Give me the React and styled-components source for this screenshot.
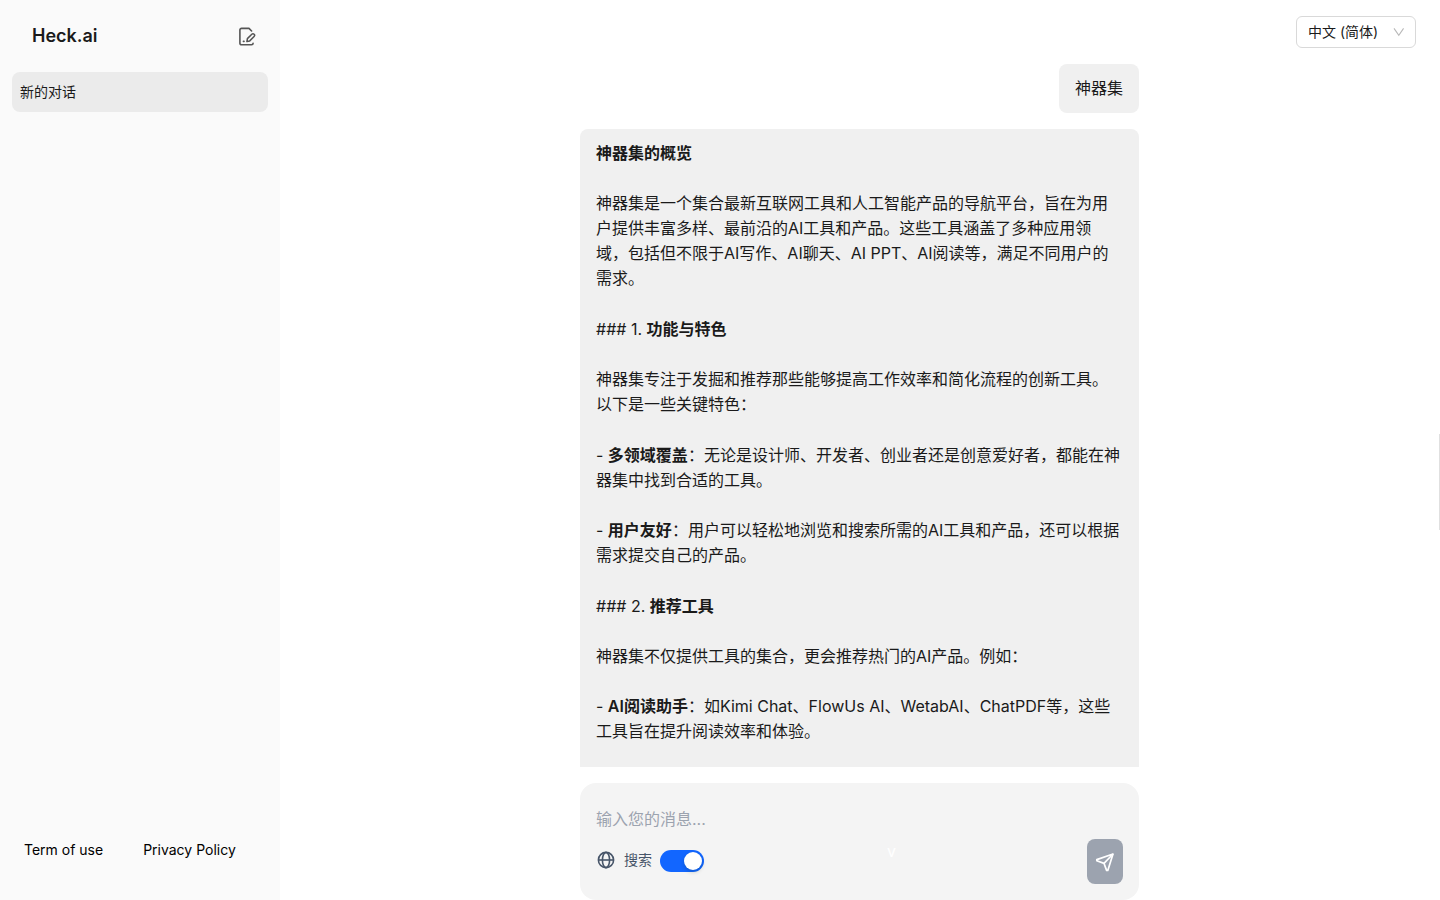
import React, { useState } from 'react';
import styled, { createGlobalStyle } from 'styled-components';

const palette = {
  text: '#1a1a1a',
  side: '#fafafa',
  active: '#ebebeb',
  bubble: '#f0f0f0',
  panel: '#f4f4f4',
  blue: '#1266ff',
  slate: '#475569',
  muted: '#9ca3af',
};

const GlobalStyle = createGlobalStyle`
  * {
    box-sizing: border-box;
  }
  body {
    margin: 0;
    background: #fff;
    color: ${palette.text};
    font-family: Inter, 'Noto Sans CJK SC', sans-serif;
    font-size: 16px;
    line-height: 25px;
  }
  button, input, select, textarea {
    font: inherit;
    color: inherit;
  }
`;

const Layout = styled.div`
  display: flex;
  height: 100vh;
`;

const Sidebar = styled.aside`
  display: flex;
  flex-direction: column;
  flex: 0 0 280px;
  background: ${palette.side};
`;

const SideHead = styled.div`
  display: flex;
  align-items: center;
  justify-content: space-between;
  height: 72px;
  padding: 0 24px 0 32px;
`;

const Brand = styled.h1`
  margin: 0 0 2px;
  font-size: 18px;
  font-weight: 600;
`;

const IconButton = styled.button`
  display: flex;
  padding: 0;
  border: 0;
  background: none;
  cursor: pointer;
`;

const ChatList = styled.nav`
  flex: 1;
  padding: 0 12px;
`;

const ChatItem = styled.a`
  display: flex;
  align-items: center;
  height: 40px;
  padding: 0 8px;
  border-radius: 8px;
  background: ${({ $active }) => ($active ? palette.active : 'transparent')};
  color: inherit;
  font-size: 14px;
  line-height: 22px;
  text-decoration: none;
`;

const SideFooter = styled.footer`
  display: flex;
  gap: 40px;
  height: 62px;
  padding: 0 24px;

  a {
    color: #000;
    font-size: 14px;
    line-height: 24px;
    text-decoration: none;
  }
`;

const Main = styled.main`
  display: flex;
  flex-direction: column;
  flex: 1;
  min-width: 0;
`;

const TopBar = styled.header`
  display: flex;
  justify-content: flex-end;
  height: 64px;
  padding: 16px 24px;
`;

const SelectWrap = styled.label`
  display: grid;
  grid-template-columns: 1fr 24px;
  align-items: center;
  width: 120px;
  height: 32px;

  svg {
    grid-area: 1 / 2;
    pointer-events: none;
  }
`;

const Select = styled.select`
  grid-area: 1 / 1 / 2 / 3;
  width: 100%;
  height: 32px;
  padding: 0 11px 2px;
  border: 1px solid #d9d9d9;
  border-radius: 6px;
  background: #fff;
  font-size: 14px;
  appearance: none;
`;

const Body = styled.div`
  display: flex;
  align-items: center;
  flex: 1;
  min-height: 0;
`;

const Column = styled.section`
  display: flex;
  flex-direction: column;
  flex: 1;
  gap: 16px;
  min-width: 0;
  height: 100%;
  margin: 0 300px;

  @media (max-width: 1100px) {
    margin: 0 24px;
  }
`;

const Handle = styled.div`
  width: 1px;
  height: 96px;
  background: #e0e0e0;
`;

const Messages = styled.div`
  display: flex;
  flex-direction: column;
  flex: 1;
  gap: 16px;
  min-height: 0;
  overflow-y: auto;
  scrollbar-width: none;
`;

const Bubble = styled.div`
  flex-shrink: 0;
  align-self: ${({ $own }) => ($own ? 'flex-end' : 'stretch')};
  padding: 12px 16px;
  border-radius: 8px;
  background: ${palette.bubble};
`;

const Text = styled.p`
  margin: 0 0 ${({ $gap }) => $gap || 26}px;

  ${Bubble} > &:only-child {
    margin: 0;
  }

  strong {
    font-weight: 600;
  }
`;

const Composer = styled.form`
  display: flex;
  flex-direction: column;
  padding: 16px;
  border-radius: 16px;
  background: ${palette.panel};
`;

const MessageInput = styled.textarea`
  display: block;
  width: 100%;
  height: 40px;
  padding: 8px 0;
  border: 0;
  outline: 0;
  background: none;
  line-height: 24px;
  resize: none;

  &::placeholder {
    color: ${palette.muted};
  }
`;

const Actions = styled.div`
  display: flex;
  align-items: center;
  justify-content: space-between;
`;

const SearchLabel = styled.label`
  display: flex;
  align-items: flex-start;
  gap: 8px;
  padding-bottom: 1px;
  color: ${palette.slate};
  font-size: 14px;
  line-height: 20px;
`;

const Switch = styled.input`
  display: flex;
  align-items: center;
  width: 44px;
  height: 22px;
  margin: 0;
  padding: 0 2px;
  border-radius: 11px;
  background: ${({ checked }) => (checked ? palette.blue : '#bfbfbf')};
  justify-content: ${({ checked }) => (checked ? 'flex-end' : 'flex-start')};
  appearance: none;
  cursor: pointer;

  &::before {
    content: '';
    width: 18px;
    height: 18px;
    border-radius: 50%;
    background: #fff;
    box-shadow: 0 2px 4px rgba(0, 35, 11, 0.2);
  }
`;

const Mark = styled.span`
  align-self: flex-start;
  color: #fff;
`;

const SendButton = styled.button`
  display: flex;
  align-items: center;
  justify-content: center;
  width: 36px;
  height: 45px;
  margin-left: 8px;
  padding: 0;
  border: 0;
  border-radius: 8px;
  background: ${palette.muted};
  color: #fff;
`;

const NewChatIcon = () => (
  <svg width="18" height="20" viewBox="0 0 18 20" fill="none" stroke="#555" strokeWidth="1.6" strokeLinecap="round" strokeLinejoin="round">
    <path d="M13.6 5 11 2.4H3.5A1.6 1.6 0 0 0 1.9 4v13.2a1.6 1.6 0 0 0 1.6 1.6h10a1.6 1.6 0 0 0 1.6-1.6" />
    <path d="m9.4 12.6 4.4-4.4a1.6 1.6 0 0 1 2.3 2.3l-4.4 4.4-2.8.6Z" strokeWidth="1.5" />
    <path d="M5.4 15.4h.6" />
  </svg>
);

const ArrowIcon = () => (
  <svg width="12" height="10" viewBox="0 0 12 10" fill="none" stroke="#b8b8b8" strokeWidth="1.1">
    <path d="m2 1.4 4.8 6.8 4.8-6.8" />
  </svg>
);

const GlobeIcon = () => (
  <svg width="20" height="20" viewBox="0 0 20 20" fill="none" stroke="currentColor" strokeWidth="1.6">
    <circle cx="10" cy="10" r="7.6" />
    <ellipse cx="10" cy="10" rx="3.6" ry="7.6" />
    <path d="M2.4 10h15.2" />
  </svg>
);

const SendIcon = () => (
  <svg width="20" height="20" viewBox="0 0 20 20" fill="none" stroke="currentColor" strokeWidth="1.7" strokeLinejoin="round">
    <path d="M18 2 1.8 7.6v1.2L9 11.4l2.6 7h1.2Z" />
    <path d="M18 2 9 11.4" />
  </svg>
);

const App = () => {
  const [search, setSearch] = useState(true);
  const [message, setMessage] = useState('');

  return (
    <Layout>
      <GlobalStyle />
      <Sidebar>
        <SideHead>
          <Brand>Heck.ai</Brand>
          <IconButton type="button" aria-label="新的对话">
            <NewChatIcon />
          </IconButton>
        </SideHead>
        <ChatList>
          <ChatItem href="#chat" $active>
            新的对话
          </ChatItem>
        </ChatList>
        <SideFooter>
          <a href="#terms">Term of use</a>
          <a href="#privacy">Privacy Policy</a>
        </SideFooter>
      </Sidebar>
      <Main>
        <TopBar>
          <SelectWrap>
            <Select aria-label="语言" defaultValue="zh">
              <option value="zh">中文 (简体)</option>
            </Select>
            <ArrowIcon />
          </SelectWrap>
        </TopBar>
        <Body>
          <Column>
            <Messages>
              <Bubble $own>
                <Text>神器集</Text>
              </Bubble>
              <Bubble>
                <Text $gap={25}>
                  <strong>神器集的概览</strong>
                </Text>
                <Text>
                  神器集是一个集合最新互联网工具和人工智能产品的导航平台，旨在为用户提供丰富多样、最前沿的AI工具和产品。这些工具涵盖了多种应用领域，包括但不限于AI写作、AI聊天、AI
                  PPT、AI阅读等，满足不同用户的需求。
                </Text>
                <Text $gap={25}>
                  ### 1. <strong>功能与特色</strong>
                </Text>
                <Text>
                  神器集专注于发掘和推荐那些能够提高工作效率和简化流程的创新工具。以下是一些关键特色：
                </Text>
                <Text $gap={25}>
                  - <strong>多领域覆盖</strong>
                  ：无论是设计师、开发者、创业者还是创意爱好者，都能在神器集中找到合适的工具。
                </Text>
                <Text>
                  - <strong>用户友好</strong>
                  ：用户可以轻松地浏览和搜索所需的AI工具和产品，还可以根据需求提交自己的产品。
                </Text>
                <Text $gap={25}>
                  ### 2. <strong>推荐工具</strong>
                </Text>
                <Text $gap={25}>
                  神器集不仅提供工具的集合，更会推荐热门的AI产品。例如：
                </Text>
                <Text>
                  - <strong>AI阅读助手</strong>
                  ：如Kimi Chat、FlowUs AI、WetabAI、ChatPDF等，这些工具旨在提升阅读效率和体验。
                </Text>
              </Bubble>
            </Messages>
            <Composer onSubmit={(e) => e.preventDefault()}>
              <MessageInput
                aria-label="消息"
                placeholder="输入您的消息..."
                value={message}
                onChange={(e) => setMessage(e.target.value)}
              />
              <Actions>
                <SearchLabel>
                  <GlobeIcon />
                  搜索
                  <Switch
                    type="checkbox"
                    role="switch"
                    checked={search}
                    onChange={(e) => setSearch(e.target.checked)}
                  />
                </SearchLabel>
                <Mark>v</Mark>
                <SendButton type="submit" aria-label="发送">
                  <SendIcon />
                </SendButton>
              </Actions>
            </Composer>
          </Column>
          <Handle />
        </Body>
      </Main>
    </Layout>
  );
};

export default App;
